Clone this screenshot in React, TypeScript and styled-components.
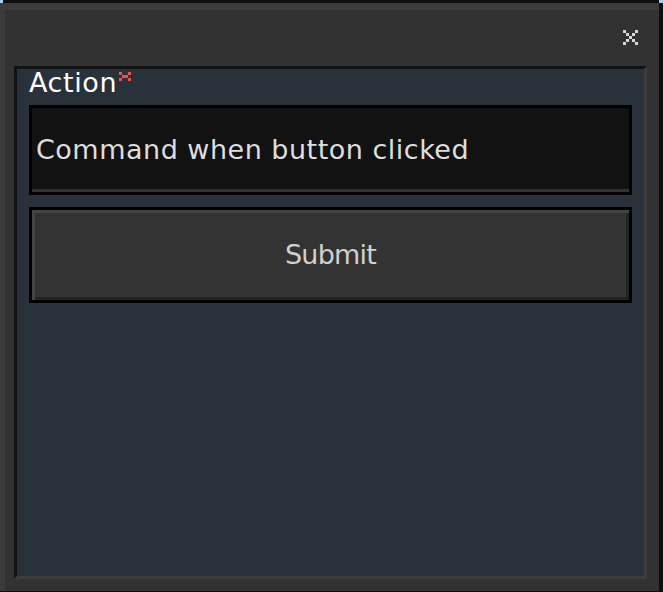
import React from "react";
import styled, { createGlobalStyle } from "styled-components";

const GlobalStyle = createGlobalStyle`
  html, body {
    margin: 0;
    padding: 0;
    background: #000;
  }
  #root {
    width: 663px;
    height: 592px;
  }
  * { box-sizing: border-box; }
`;

const Window = styled.div`
  position: relative;
  width: 663px;
  height: 592px;
  display: flex;
  flex-direction: column;
  background: #323232;
  border-top: 3px solid #0e0e0e;
  border-right: 4px solid #0e0e0e;
  border-bottom: 1px solid #0e0e0e;
  padding: 0 12px 12px 14px;
  box-shadow: inset 5px 7px 0 0 #3b3b3b;
  font-family: "DejaVu Sans", "Liberation Sans", sans-serif;

  &::before,
  &::after {
    content: "";
    position: absolute;
    top: -3px;
    width: 3px;
    height: 3px;
    background: #a8cdf2;
  }
  &::before { left: 0; }
  &::after { right: -4px; width: 4px; }
`;

const TitleBar = styled.div`
  height: 63px;
  flex: none;
  display: flex;
  justify-content: flex-end;
  align-items: flex-start;
  padding-top: 27px;
  padding-right: 9px;
`;

const CloseButton = styled.button`
  width: 15px;
  height: 15px;
  padding: 0;
  border: none;
  background: transparent;
  display: block;
  cursor: pointer;
  svg { display: block; }
`;

const Panel = styled.div`
  flex: 1;
  display: flex;
  flex-direction: column;
  background: #29313b;
  border-style: solid;
  border-width: 3px;
  border-color: #121212 #3d3d3d #3d3d3d #121212;
  padding: 0 12px;
`;

const Label = styled.div`
  display: flex;
  align-items: flex-start;
  color: #ffffff;
  font-size: 27px;
  line-height: 27px;
  height: 27px;
  margin-bottom: 9px;
  letter-spacing: 0.6px;
`;

const Required = styled.svg`
  margin-top: 3px;
  margin-left: 2px;
  display: block;
`;

const TextInput = styled.input`
  width: 100%;
  height: 90px;
  flex: none;
  border: 3px solid #000;
  background: #121212;
  box-shadow: inset 0 -3px 0 0 #333333;
  padding: 0 4px 2px 4px;
  margin: 0;
  outline: none;
  color: #dedede;
  font-family: "DejaVu Sans", "Liberation Sans", sans-serif;
  font-size: 27px;
  letter-spacing: 0.5px;

  &::placeholder {
    color: #dedede;
    opacity: 1;
  }
`;

const SubmitButton = styled.button`
  width: 100%;
  height: 96px;
  flex: none;
  margin-top: 12px;
  border: 3px solid #000;
  background: #333333;
  box-shadow: inset 3px 3px 0 0 #444444, inset -3px -3px 0 0 #232323;
  color: #d0d0d0;
  font-family: "DejaVu Sans", "Liberation Sans", sans-serif;
  font-size: 27px;
  line-height: 90px;
  letter-spacing: -0.8px;
  padding: 0;
  cursor: pointer;
`;

const pixelsX = [
  [0, 0], [4, 0],
  [1, 1], [3, 1],
  [2, 2],
  [1, 3], [3, 3],
  [0, 4], [4, 4],
];

const pixelsReq = [
  [0, 0], [3, 0],
  [1, 1], [2, 1],
  [0, 2], [3, 2],
];

export default function App() {
  return (
    <>
      <GlobalStyle />
      <Window>
        <TitleBar>
          <CloseButton aria-label="Close">
            <svg width="15" height="15" viewBox="0 0 15 15">
              {pixelsX.map(([x, y]) => (
                <rect key={`${x}-${y}`} x={x * 3} y={y * 3} width="3" height="3" fill="#d6d6d6" />
              ))}
            </svg>
          </CloseButton>
        </TitleBar>
        <Panel>
          <Label>
            Action
            <Required width="12" height="9" viewBox="0 0 12 9">
              {pixelsReq.map(([x, y]) => (
                <rect key={`${x}-${y}`} x={x * 3} y={y * 3} width="3" height="3" fill="#ee4f4f" />
              ))}
            </Required>
          </Label>
          <TextInput placeholder="Command when button clicked" />
          <SubmitButton>Submit</SubmitButton>
        </Panel>
      </Window>
    </>
  );
}
